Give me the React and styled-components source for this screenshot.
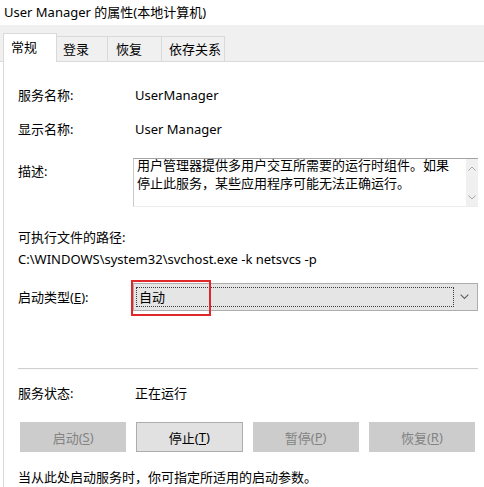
import React from 'react'
import styled, { createGlobalStyle } from 'styled-components'

const GlobalStyle = createGlobalStyle`
  html, body {
    margin: 0;
    padding: 0;
    background: #ffffff;
  }
  body {
    font-family: "Noto Sans", "Noto Sans CJK SC", sans-serif;
    font-size: 13px;
    color: #000000;
  }
`

const Window = styled.div`
  width: 484px;
  height: 487px;
  overflow: hidden;
  background: #ffffff;
  display: flex;
  flex-direction: column;
`

const Title = styled.div`
  height: 25px;
  line-height: 24px;
  padding-left: 4px;
  font-size: 13px;
  white-space: nowrap;
`

const TabStrip = styled.div`
  height: 38px;
  background: #f0f0f0;
  display: flex;
  align-items: flex-end;
  padding-left: 3px;
  box-sizing: border-box;
  border-bottom: 1px solid #d9d9d9;
`

const Tab = styled.div`
  width: ${p => p.$w}px;
  box-sizing: border-box;
  height: ${p => (p.$active ? 29 : 25)}px;
  line-height: ${p => (p.$active ? 27 : 24)}px;
  padding-left: ${p => p.$pad}px;
  background: ${p => (p.$active ? '#ffffff' : '#f0f0f0')};
  border: 1px solid #d9d9d9;
  border-bottom: none;
  margin-bottom: ${p => (p.$active ? -1 : 0)}px;
  margin-left: ${p => (p.$active ? 0 : -1)}px;
  font-size: 13px;
  white-space: nowrap;
  position: relative;
  z-index: ${p => (p.$active ? 1 : 0)};
`

const Panel = styled.div`
  flex: 1;
  margin-left: 3px;
  border-left: 1px solid #d9d9d9;
  background: #ffffff;
  padding: 23px 6px 0 14px;
  display: flex;
  flex-direction: column;
`

const Row = styled.div`
  display: grid;
  grid-template-columns: 115px 1fr;
  align-items: ${p => p.$align || 'center'};
  margin-top: ${p => p.$mt || 0}px;
  min-height: 20px;
`

const Label = styled.div`
  line-height: 20px;
  white-space: nowrap;
  padding-top: ${p => p.$pt || 0}px;
`

const Value = styled.div`
  line-height: 20px;
  white-space: nowrap;
  padding-left: 2px;
`

const Line = styled.div`
  line-height: 20px;
  white-space: nowrap;
  margin-top: ${p => p.$mt || 0}px;
`

const TextBox = styled.div`
  height: 49px;
  box-sizing: border-box;
  border-top: 1px solid #a3a3a3;
  border-left: 1px solid #c9c9c9;
  border-bottom: 1px solid #ececec;
  display: flex;
`

const TextBody = styled.div`
  flex: 1;
  padding: 0 10px 0 3px;
  line-height: 18px;
  margin-top: -3px;
  font-size: 13px;
`

const ScrollBar = styled.div`
  width: 12px;
  background: #f0f0f0;
  display: flex;
  flex-direction: column;
  justify-content: space-between;
  align-items: center;
  padding: 7px 0 6px;
`

const Combo = styled.div`
  position: relative;
  height: 28px;
  box-sizing: border-box;
  background: #e5e5e5;
  border: 1px solid #adadad;
  display: flex;
  align-items: center;
  padding: 0 2px;
`

const FocusRect = styled.div`
  width: 318px;
  height: 20px;
  box-sizing: border-box;
  border: 1px dotted #3c3c3c;
  line-height: 18px;
  padding-left: 2px;
`

const ComboArrow = styled.div`
  flex: 1;
  display: flex;
  justify-content: center;
  align-items: center;
`

const Highlight = styled.div`
  position: absolute;
  left: -3px;
  top: -4px;
  width: 80px;
  height: 36px;
  box-sizing: border-box;
  border: 2px solid #e0282b;
`

const Separator = styled.div`
  height: 1px;
  background: #cfcfcf;
  border-bottom: 1px solid #fafafa;
  margin-top: 57px;
`

const Buttons = styled.div`
  display: grid;
  grid-template-columns: repeat(4, 1fr);
  gap: 0 10px;
  margin: 19px 3px 0 2px;
`

const Button = styled.div`
  height: 30px;
  box-sizing: border-box;
  display: flex;
  align-items: center;
  justify-content: center;
  font-size: 13px;
  background: ${p => (p.$disabled ? '#cccccc' : '#e1e1e1')};
  border: 1px solid ${p => (p.$disabled ? '#cccccc' : '#adadad')};
  color: ${p => (p.$disabled ? '#838383' : '#000000')};
  u {
    text-decoration: underline;
    text-underline-offset: 2px;
  }
`

const Chevron = ({ up, color = '#a6a6a6', w = 8 }) => (
  <svg width={w} height={w / 2 + 1} viewBox="0 0 8 5">
    <polyline
      points={up ? '0.5,4.5 4,1 7.5,4.5' : '0.5,0.5 4,4 7.5,0.5'}
      fill="none"
      stroke={color}
      strokeWidth="1"
    />
  </svg>
)

const tabs = [
  { name: '常规', w: 54, pad: 7, active: true },
  { name: '登录', w: 52, pad: 6 },
  { name: '恢复', w: 55, pad: 8 },
  { name: '依存关系', w: 64, pad: 7 }
]

export default function App() {
  return (
    <>
      <GlobalStyle />
      <Window>
        <Title>User Manager 的属性(本地计算机)</Title>
        <TabStrip>
          {tabs.map(t => (
            <Tab key={t.name} $w={t.w} $pad={t.pad} $active={t.active}>
              {t.name}
            </Tab>
          ))}
        </TabStrip>
        <Panel>
          <Row>
            <Label>服务名称:</Label>
            <Value>UserManager</Value>
          </Row>
          <Row $mt={14}>
            <Label>显示名称:</Label>
            <Value>User Manager</Value>
          </Row>
          <Row $mt={19} $align="start">
            <Label $pt={3}>描述:</Label>
            <TextBox>
              <TextBody>
                用户管理器提供多用户交互所需要的运行时组件。如果停止此服务，某些应用程序可能无法正确运行。
              </TextBody>
              <ScrollBar>
                <Chevron up />
                <Chevron />
              </ScrollBar>
            </TextBox>
          </Row>
          <Line $mt={20}>可执行文件的路径:</Line>
          <Line $mt={2}>C:\WINDOWS\system32\svchost.exe -k netsvcs -p</Line>
          <Row $mt={14}>
            <Label>启动类型(<u>E</u>):</Label>
            <Combo>
              <FocusRect>自动</FocusRect>
              <ComboArrow>
                <Chevron color="#606060" w={9} />
              </ComboArrow>
              <Highlight />
            </Combo>
          </Row>
          <Separator />
          <Row $mt={13}>
            <Label>服务状态:</Label>
            <Value>正在运行</Value>
          </Row>
          <Buttons>
            <Button $disabled>启动(<u>S</u>)</Button>
            <Button>停止(<u>T</u>)</Button>
            <Button $disabled>暂停(<u>P</u>)</Button>
            <Button $disabled>恢复(<u>R</u>)</Button>
          </Buttons>
          <Line $mt={15}>当从此处启动服务时，你可指定所适用的启动参数。</Line>
        </Panel>
      </Window>
    </>
  )
}
